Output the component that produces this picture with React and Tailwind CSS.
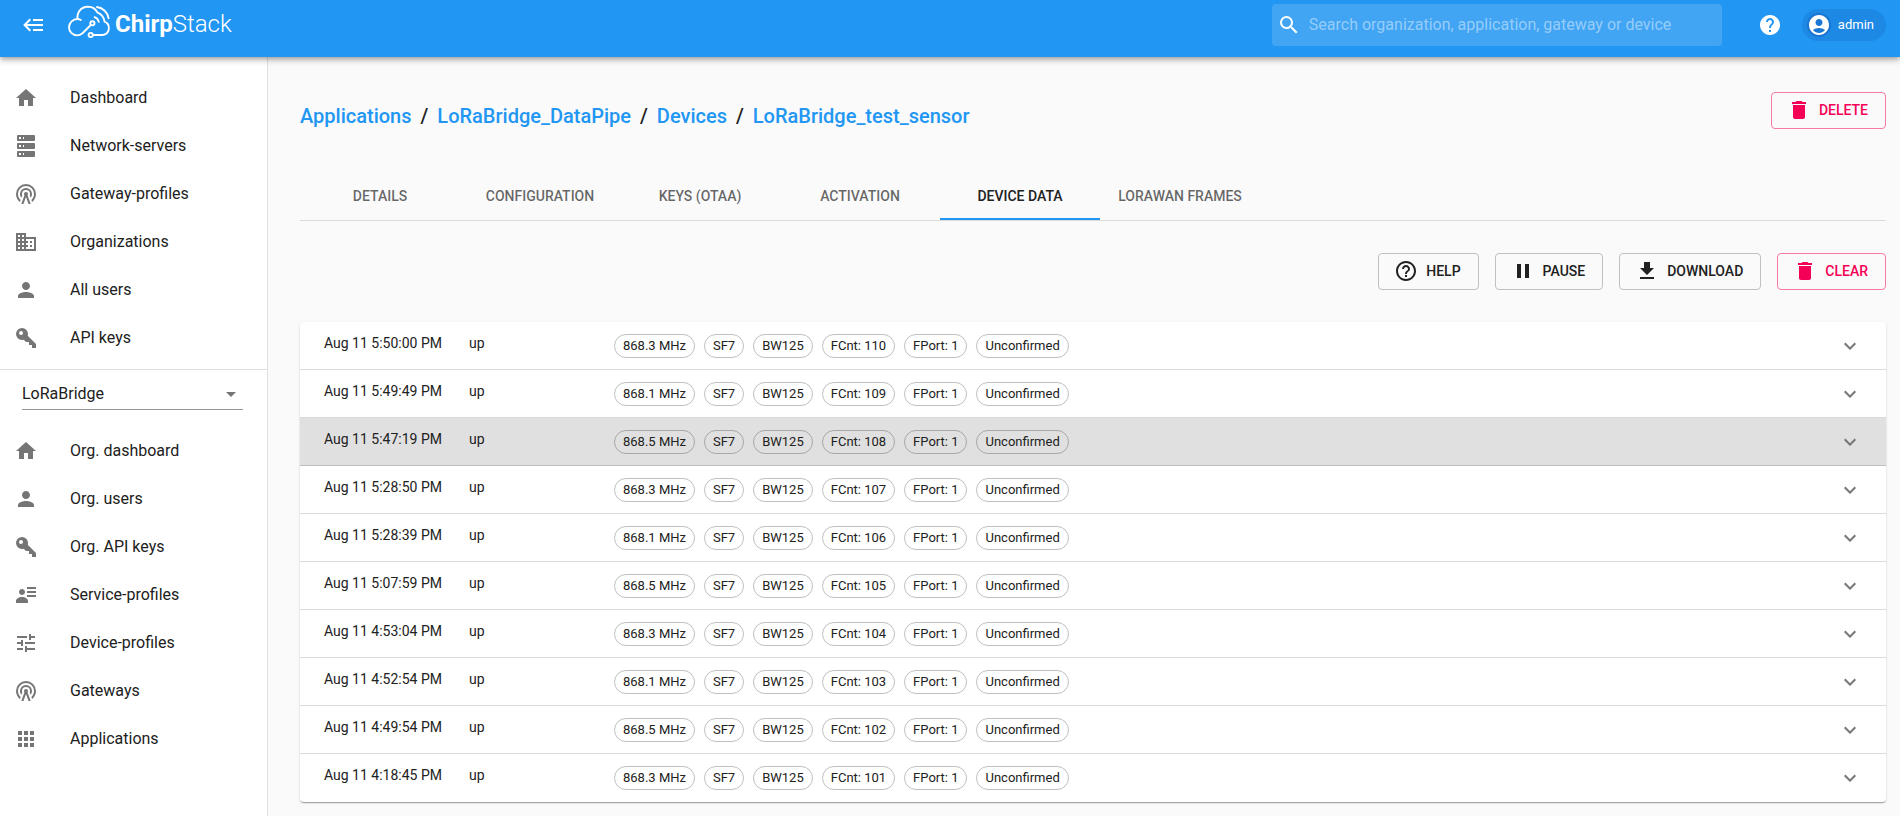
import React from "react";
import {
  MdHome, MdDomain, MdPerson, MdTune, MdApps, MdSearch, MdHelp, MdAccountCircle,
  MdDelete, MdHelpOutline, MdPause, MdExpandMore, MdArrowDropDown,
} from "react-icons/md";

function Glyph({ d, className }) {
  return (
    <svg viewBox="0 0 24 24" fill="currentColor" aria-hidden="true" className={className}>
      <path d={d} />
    </svg>
  );
}

const paths = {
  server: "M4,1H20A1,1 0 0,1 21,2V6A1,1 0 0,1 20,7H4A1,1 0 0,1 3,6V2A1,1 0 0,1 4,1M4,9H20A1,1 0 0,1 21,10V14A1,1 0 0,1 20,15H4A1,1 0 0,1 3,14V10A1,1 0 0,1 4,9M4,17H20A1,1 0 0,1 21,18V22A1,1 0 0,1 20,23H4A1,1 0 0,1 3,22V18A1,1 0 0,1 4,17M9,5H10V3H9V5M9,13H10V11H9V13M9,21H10V19H9V21M5,3V5H7V3H5M5,11V13H7V11H5M5,19V21H7V19H5Z",
  tower: "M12,10A2,2 0 0,1 14,12C14,12.5 13.82,12.94 13.53,13.29L16.7,22H14.57L12,14.93L9.43,22H7.3L10.47,13.29C10.18,12.94 10,12.5 10,12A2,2 0 0,1 12,10M12,8A4,4 0 0,0 8,12C8,12.5 8.1,13 8.28,13.46L7.4,15.86C6.53,14.81 6,13.47 6,12A6,6 0 0,1 12,6A6,6 0 0,1 18,12C18,13.47 17.47,14.81 16.6,15.86L15.72,13.46C15.9,13 16,12.5 16,12A4,4 0 0,0 12,8M12,4A8,8 0 0,0 4,12C4,14.36 5,16.5 6.64,17.94L5.92,19.94C3.54,18.11 2,15.23 2,12A10,10 0 0,1 12,2A10,10 0 0,1 22,12C22,15.23 20.46,18.11 18.08,19.94L17.36,17.94C19,16.5 20,14.36 20,12A8,8 0 0,0 12,4Z",
  key: "M22,18V22H18V19H15V16H12L9.74,13.74C9.19,13.91 8.61,14 8,14A6,6 0 0,1 2,8A6,6 0 0,1 8,2A6,6 0 0,1 14,8C14,8.61 13.91,9.19 13.74,9.74L22,18M7,5A2,2 0 0,0 5,7A2,2 0 0,0 7,9A2,2 0 0,0 9,7A2,2 0 0,0 7,5Z",
  accountDetails: "M11 9C11 10.66 9.66 12 8 12C6.34 12 5 10.66 5 9C5 7.34 6.34 6 8 6C9.66 6 11 7.34 11 9M14 20H2V18C2 15.79 4.69 14 8 14C11.31 14 14 15.79 14 18M22 12V14H13V12M22 8V10H13V8M22 4V6H13V4Z",
  backburger: "M5,13L9,17L7.6,18.42L1.18,12L7.6,5.58L9,7L5,11H21V13H5M21,6V8H11V6H21M21,16V18H11V16H21Z",
  download: "M5,20H19V18H5M19,9H15V3H9V9H5L12,16L19,9Z",
};

const ServerIcon = (p) => <Glyph d={paths.server} {...p} />;
const TowerIcon = (p) => <Glyph d={paths.tower} {...p} />;
const KeyIcon = (p) => <Glyph d={paths.key} {...p} />;
const AccountDetailsIcon = (p) => <Glyph d={paths.accountDetails} {...p} />;
const BackburgerIcon = (p) => <Glyph d={paths.backburger} {...p} />;
const DownloadIcon = (p) => <Glyph d={paths.download} {...p} />;

const globalNav = [
  { label: "Dashboard", Icon: MdHome },
  { label: "Network-servers", Icon: ServerIcon },
  { label: "Gateway-profiles", Icon: TowerIcon },
  { label: "Organizations", Icon: MdDomain },
  { label: "All users", Icon: MdPerson },
  { label: "API keys", Icon: KeyIcon },
];

const orgNav = [
  { label: "Org. dashboard", Icon: MdHome },
  { label: "Org. users", Icon: MdPerson },
  { label: "Org. API keys", Icon: KeyIcon },
  { label: "Service-profiles", Icon: AccountDetailsIcon },
  { label: "Device-profiles", Icon: MdTune },
  { label: "Gateways", Icon: TowerIcon },
  { label: "Applications", Icon: MdApps },
];

const crumbs = ["Applications", "LoRaBridge_DataPipe", "Devices", "LoRaBridge_test_sensor"];

const tabs = ["Details", "Configuration", "Keys (OTAA)", "Activation", "Device data", "LoRaWAN frames"];
const activeTab = "Device data";

const events = [
  { time: "Aug 11 5:50:00 PM", freq: "868.3 MHz", count: 110 },
  { time: "Aug 11 5:49:49 PM", freq: "868.1 MHz", count: 109 },
  { time: "Aug 11 5:47:19 PM", freq: "868.5 MHz", count: 108, focused: true },
  { time: "Aug 11 5:28:50 PM", freq: "868.3 MHz", count: 107 },
  { time: "Aug 11 5:28:39 PM", freq: "868.1 MHz", count: 106 },
  { time: "Aug 11 5:07:59 PM", freq: "868.5 MHz", count: 105 },
  { time: "Aug 11 4:53:04 PM", freq: "868.3 MHz", count: 104 },
  { time: "Aug 11 4:52:54 PM", freq: "868.1 MHz", count: 103 },
  { time: "Aug 11 4:49:54 PM", freq: "868.5 MHz", count: 102 },
  { time: "Aug 11 4:18:45 PM", freq: "868.3 MHz", count: 101 },
];

function Logo() {
  return (
    <a href="#" aria-label="ChirpStack" className="flex items-start gap-1 text-white">
      <svg viewBox="0 0 45 35" fill="none" stroke="currentColor" strokeWidth="1.9" strokeLinecap="round" className="h-[35px] w-[45px]" aria-hidden="true">
        <path d="M24.8 21 L16.5 29.2 Q14 31.4 11 31.4 A8.2 8.2 0 0 1 3 23.2 A8.4 8.4 0 0 1 11.6 15 A10.4 10.4 0 0 1 11.8 10.5 A10.6 10.6 0 0 1 31.4 8.4 A12 12 0 0 1 38.6 17.6 A7 7 0 0 1 36.6 31 H27" />
        <path d="M12 15 Q13.6 15.2 14.8 16" />
        <circle cx="26.4" cy="19.3" r="2.1" />
        <circle cx="24.7" cy="31" r="2.1" />
        <path d="M28.6 13.2 A6.6 6.6 0 0 1 32.8 17.8" />
        <path d="M31 3 A13.5 13.5 0 0 1 42.6 14.4" />
      </svg>
      <span className="pt-1 text-2xl"><span className="font-bold">Chirp</span><span className="font-light">Stack</span></span>
    </a>
  );
}

function Nav({ items, label }) {
  return (
    <nav aria-label={label}>
      {items.map(({ label: text, Icon }) => (
        <a key={text} href="#" className="flex h-12 items-center gap-8 px-3.5">
          <Icon className="size-6 shrink-0 text-[#757575]" />
          {text}
        </a>
      ))}
    </nav>
  );
}

function OutlineButton({ Icon, danger, children }) {
  return (
    <button
      type="button"
      className={`flex h-[37px] items-center gap-2 rounded border pr-[17px] pl-[15px] pb-px text-sm font-medium uppercase ${
        danger ? "border-[#f77aa5] text-[#f50057]" : "border-[#c0c0c0]"
      }`}
    >
      <Icon className="size-6" />
      {children}
    </button>
  );
}

function Chip({ children }) {
  return (
    <span className="flex h-6 items-center rounded-full border border-black/25 px-2 text-[13px]">{children}</span>
  );
}

export default function App() {
  return (
    <div className="flex min-h-screen flex-col bg-[#fafafa] font-['Roboto',sans-serif] text-base text-[#212121]">
      <header className="z-10 flex h-[57px] items-start bg-[#2196f3] pr-3.5 pl-[22px] text-white shadow-[0_2px_4px_-1px_rgba(0,0,0,0.2),0_4px_5px_rgba(0,0,0,0.14),0_1px_10px_rgba(0,0,0,0.12)]">
        <div className="flex h-[49px] flex-1 items-center">
          <button type="button" aria-label="Toggle menu"><BackburgerIcon className="size-6" /></button>
          <div className="ml-5 flex-1 pb-1.5"><Logo /></div>
          <label className="flex h-[42px] w-[450px] items-center gap-2 rounded bg-white/15 px-[5px]">
            <MdSearch className="size-6 shrink-0" />
            <input
              type="search"
              aria-label="Search"
              placeholder="Search organization, application, gateway or device"
              className="min-w-0 flex-1 bg-transparent outline-none placeholder:text-white/45"
            />
          </label>
          <button type="button" aria-label="Help" className="ml-9"><MdHelp className="size-6" /></button>
          <button type="button" className="ml-5 flex h-8 items-center gap-[7px] rounded-full bg-[#1e88e5] pr-3 pl-[5px] text-[13px]">
            <span className="rounded-full bg-[#1976d2]"><MdAccountCircle className="size-6" /></span>
            admin
          </button>
        </div>
      </header>

      <div className="flex flex-1">
        <aside className="w-[268px] shrink-0 border-r border-black/12 bg-white pt-[17px]">
          <Nav items={globalNav} label="Global" />
          <div className="mt-[7px] border-t border-black/12 px-[22px] pt-2">
            <div className="relative w-[221px]">
              <select aria-label="Organization" className="h-8 w-full appearance-none border-b border-[#949494] bg-transparent outline-none">
                <option>LoRaBridge</option>
              </select>
              <MdArrowDropDown className="pointer-events-none absolute top-1 right-0 size-6 text-[#757575]" />
            </div>
          </div>
          <div className="mt-[17px]"><Nav items={orgNav} label="Organization" /></div>
        </aside>

        <main className="flex-1 pt-[35px] pr-3.5 pb-3.5 pl-8">
          <div className="flex items-start justify-between">
            <ol className="flex gap-[9px] pt-2.5 text-xl font-medium">
              {crumbs.map((crumb, i) => (
                <li key={crumb} className="flex gap-[9px]">
                  {i > 0 && <span aria-hidden="true">/</span>}
                  <a href="#" className="text-[#2196f3]">{crumb}</a>
                </li>
              ))}
            </ol>
            <OutlineButton Icon={MdDelete} danger>Delete</OutlineButton>
          </div>

          <div role="tablist" className="mt-[43px] flex border-b border-black/12">
            {tabs.map((tab) => (
              <button
                key={tab}
                type="button"
                role="tab"
                aria-selected={tab === activeTab}
                className={`h-[47px] min-w-40 border-b-2 px-3 text-sm font-medium uppercase ${
                  tab === activeTab ? "border-[#2196f3]" : "border-transparent text-black/60"
                }`}
              >
                {tab}
              </button>
            ))}
          </div>

          <div className="mt-8 flex justify-end gap-4">
            <OutlineButton Icon={MdHelpOutline}>Help</OutlineButton>
            <OutlineButton Icon={MdPause}>Pause</OutlineButton>
            <OutlineButton Icon={DownloadIcon}>Download</OutlineButton>
            <OutlineButton Icon={MdDelete} danger>Clear</OutlineButton>
          </div>

          <ul className="mt-8 overflow-hidden rounded bg-white shadow-[0_2px_1px_-1px_rgba(0,0,0,0.2),0_1px_1px_rgba(0,0,0,0.14),0_1px_3px_rgba(0,0,0,0.12)]">
            {events.map((event) => (
              <li key={event.count} className={`border-b border-black/15 last:border-transparent ${event.focused ? "bg-[#e0e0e0]" : ""}`}>
                <button type="button" className="flex h-[47px] w-full items-start px-6 pt-3 text-left">
                  <span className="w-[145px] text-sm leading-[18px]">{event.time}</span>
                  <span className="w-[145px] text-sm leading-[18px]">up</span>
                  <span className="flex flex-1 gap-[9px]">
                    <Chip>{event.freq}</Chip>
                    <Chip>SF7</Chip>
                    <Chip>BW125</Chip>
                    <Chip>FCnt: {event.count}</Chip>
                    <Chip>FPort: 1</Chip>
                    <Chip>Unconfirmed</Chip>
                  </span>
                  <MdExpandMore className="size-6 text-[#757575]" />
                </button>
              </li>
            ))}
          </ul>
        </main>
      </div>
    </div>
  );
}
